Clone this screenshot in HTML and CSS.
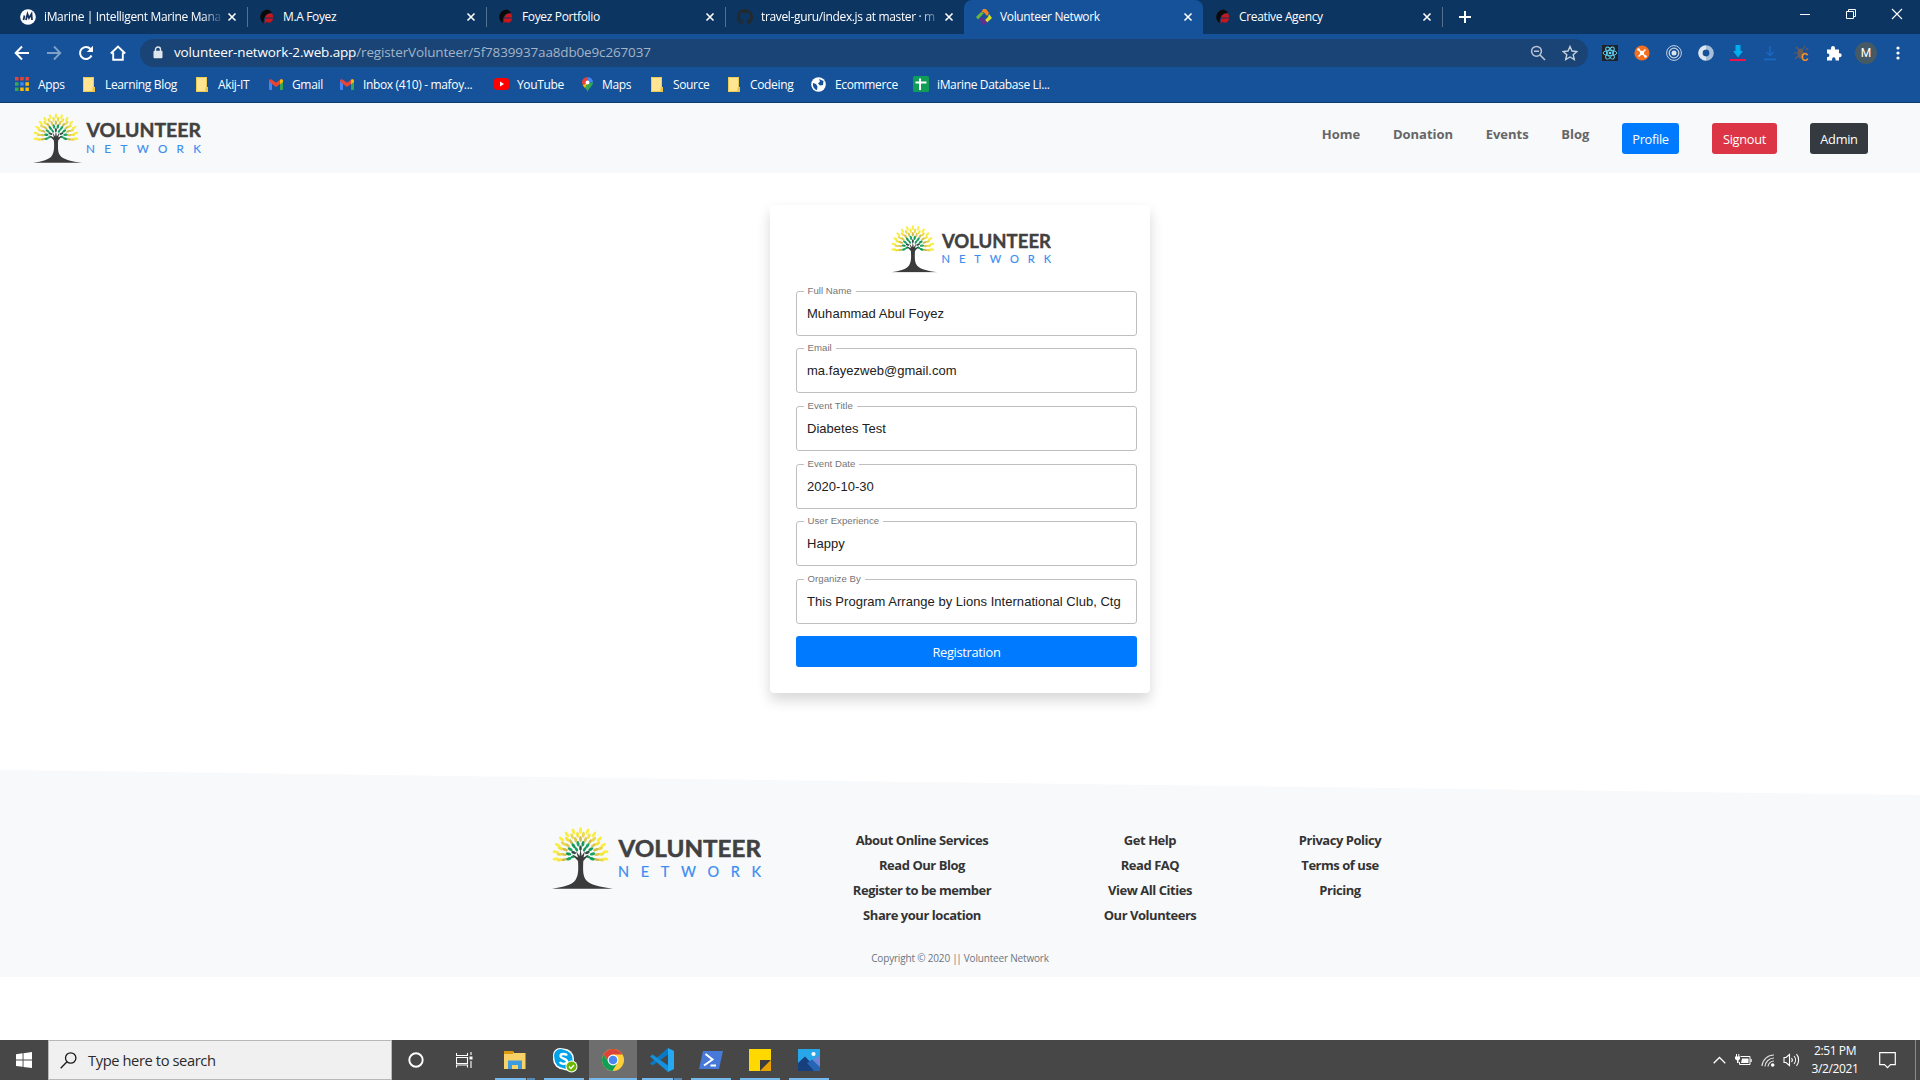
FILE: index.html
```html
<!DOCTYPE html>
<html lang="en">
<head>
<meta charset="utf-8">
<title>Volunteer Network</title>
<link rel="stylesheet" href="styles.css">
</head>
<body>
<svg class="defs" width="0" height="0" aria-hidden="true">
  <symbol id="logo" viewBox="0 0 209 62">
    <g id="leaves"></g>
    <path d="M26 34 L20 27.500 L26 30.500 L24 24 L27.500 29 L28.500 22 L29.700 29 L33 24 L31.500 30.500 L37 27.500 L31.300 34 C30.800 44 31 49 34 53 C38 58 48 60 61 61.800 L0 61.800 C12 60 20 58 23.500 53 C26.500 48 26.500 43 26 34Z" fill="#3b3b3b"/>
    <text x="66.500" y="29.500" class="logo-a" textLength="142.500" lengthAdjust="spacingAndGlyphs">VOLUNTEER</text>
    <text x="66" y="49.800" class="logo-b" textLength="143">NETWORK</text>
  </symbol>
  <symbol id="x" viewBox="0 0 10 10"><path d="M1.500 1.500l7 7M8.500 1.500l-7 7" stroke="#fff" stroke-width="1.600"/></symbol>
  <symbol id="foyez" viewBox="0 0 16 16"><path d="M8.500 .5A8 7.500 0 0 0 2.500 12l2 2.500c0-3 .3-6 2-8s4-2.500 6.500-2.500A6 6 0 0 0 8.500 .5Z" fill="#0a0a0a"/><path d="M13 4.500c-3.500-.3-6 .8-6.800 4h8a7 7 0 0 0-1.200-4ZM6 9.500h8.200c-.4 2.200-1.800 3.700-3.700 4.300L6.500 13 5.500 15.500Z" fill="#c8161d"/></symbol>
  <symbol id="folder" viewBox="0 0 12 15"><path d="M0 0h11v10h1v5H0z" fill="#ffe591"/><path d="M9.500 10.500h2V15h-2z" fill="#e9c342"/><path d="M.5.5h10v10h1v4H.5z" fill="none" stroke="#e9c342" stroke-width=".8"/></symbol>
  <symbol id="gmail" viewBox="0 0 14 11"><path d="M0 1.500V10a1 1 0 0 0 1 1h2V4Z" fill="#4285f4"/><path d="M14 1.500V10a1 1 0 0 1-1 1h-2V4Z" fill="#34a853"/><path d="M0 2C0 .3 1.700-.3 3 .8l4 3 4-3c1.300-1.100 3-.5 3 1.200L11 5 7 8 3 5Z" fill="#ea4335"/><path d="M11 .8C12.300-.3 14 .3 14 2v1l-3 2.200Z" fill="#fbbc04"/></symbol>
</svg>

<header class="browser">
  <div class="tabstrip">
    <div class="tab"><svg class="fav" viewBox="0 0 16 16"><circle cx="8" cy="8" r="7.800" fill="#fff"/><path d="M3.500 11L4.500 6.500M6 11l1.500-6 1.500 4L11.500 5l.5 6" fill="none" stroke="#17305c" stroke-width="1.800"/></svg><span class="title fade">iMarine | Intelligent Marine Mana</span><svg class="close"><use href="#x"/></svg></div>
    <div class="tab"><svg class="fav"><use href="#foyez"/></svg><span class="title">M.A Foyez</span><svg class="close"><use href="#x"/></svg></div>
    <div class="tab"><svg class="fav"><use href="#foyez"/></svg><span class="title">Foyez Portfolio</span><svg class="close"><use href="#x"/></svg></div>
    <div class="tab plain"><svg class="fav" viewBox="0 0 16 16"><path fill="#24292e" d="M8 0C3.580 0 0 3.580 0 8c0 3.540 2.290 6.530 5.470 7.590.4.070.55-.17.55-.38 0-.19-.01-.82-.01-1.490-2.010.37-2.530-.49-2.690-.94-.09-.23-.48-.94-.82-1.130-.28-.15-.68-.52-.01-.53.63-.01 1.080.58 1.230.82.72 1.210 1.870.87 2.330.66.070-.52.28-.87.51-1.070-1.780-.2-3.640-.89-3.640-3.950 0-.87.31-1.590.82-2.150-.08-.2-.36-1.020.08-2.120 0 0 .67-.21 2.200.82a7.600 7.600 0 0 1 4 0c1.530-1.040 2.200-.82 2.200-.82.44 1.100.16 1.920.08 2.120.51.56.82 1.270.82 2.150 0 3.070-1.870 3.750-3.650 3.950.29.25.54.73.54 1.480 0 1.070-.01 1.930-.01 2.200 0 .21.15.46.55.38A8 8 0 0 0 16 8c0-4.420-3.580-8-8-8z"/></svg><span class="title fade">travel-guru/index.js at master · m</span><svg class="close"><use href="#x"/></svg></div>
    <div class="tab active"><svg class="fav" viewBox="0 0 16 16"><path d="M7 0h3l3 4-2 3-3-3.500L5.500 3Z" fill="#f58220"/><path d="M13 5l3 4-5 4.500L9 11l3-3Z" fill="#d7df23"/><path d="M5 3L0 8l2 2.500L8 4Z" fill="#6cb33f"/><path d="M3 9.500L6.500 8.500 11 13 8.500 16H7Z" fill="#662d91"/></svg><span class="title">Volunteer Network</span><svg class="close"><use href="#x"/></svg></div>
    <div class="tab"><svg class="fav"><use href="#foyez"/></svg><span class="title">Creative Agency</span><svg class="close"><use href="#x"/></svg></div>
    <svg class="newtab" viewBox="0 0 12 12"><path d="M6 0v12M0 6h12" stroke="#fff" stroke-width="2"/></svg>
    <div class="winctl">
      <svg viewBox="0 0 12 12"><path d="M1 6.500h10" stroke="#fff"/></svg>
      <svg viewBox="0 0 12 12"><path d="M1.500 3.500h7v7h-7zM3.500 3V1.500h7v7H9" fill="none" stroke="#fff"/></svg>
      <svg viewBox="0 0 12 12"><path d="M1 1l10 10M11 1L1 11" stroke="#fff" stroke-width="1.100"/></svg>
    </div>
  </div>

  <div class="toolbar">
    <div class="navicons">
      <svg viewBox="0 0 16 16"><path d="M15 8H2M8 1.500L1.700 8 8 14.500" fill="none" stroke="#fff" stroke-width="2"/></svg>
      <svg class="dim" viewBox="0 0 16 16"><path d="M1 8h13M8 1.500L14.300 8 8 14.500" fill="none" stroke="#fff" stroke-width="1.800"/></svg>
      <svg viewBox="0 0 16 16"><path d="M13.500 10.500A6 6 0 1 1 12.500 4" fill="none" stroke="#fff" stroke-width="2"/><path d="M15 .8V7H8.800Z" fill="#fff"/></svg>
      <svg viewBox="0 0 16 16"><path d="M.8 8.500L8 1.500l7.200 7M3.200 7.500v7.200h9.600V7.500" fill="none" stroke="#fff" stroke-width="1.900"/></svg>
    </div>
    <div class="omnibox">
      <svg class="lock" viewBox="0 0 10 13"><path d="M2.500 5V3.500a2.500 2.500 0 0 1 5 0V5" fill="none" stroke="#dfe6ee" stroke-width="1.400"/><rect x=".5" y="4.800" width="9" height="7.500" rx="1" fill="#dfe6ee"/></svg>
      <span class="url"><b>volunteer-network-2.web.app</b><span class="path">/registerVolunteer/5f7839937aa8db0e9c267037</span></span>
      <svg class="omni-ic" viewBox="0 0 16 16"><path d="M10 10l5 5M4 6.300h5" stroke="#b9c6d6" stroke-width="1.600"/><circle cx="6.500" cy="6.300" r="4.900" fill="none" stroke="#b9c6d6" stroke-width="1.500"/></svg>
      <svg class="omni-ic" viewBox="0 0 16 16"><path d="M8 1.500l2 4.500 4.900.5-3.700 3.200 1.100 4.800L8 12l-4.300 2.500 1.100-4.800L1.100 6.500 6 6Z" fill="none" stroke="#c5d0dd" stroke-width="1.400"/></svg>
    </div>
    <div class="exts">
      <svg viewBox="0 0 16 16"><rect width="16" height="16" fill="#20232a"/><g fill="none" stroke="#61dafb" stroke-width=".9"><ellipse cx="8" cy="8" rx="6.800" ry="2.700"/><ellipse cx="8" cy="8" rx="6.800" ry="2.700" transform="rotate(60 8 8)"/><ellipse cx="8" cy="8" rx="6.800" ry="2.700" transform="rotate(120 8 8)"/></g><circle cx="8" cy="8" r="1.300" fill="#61dafb"/></svg>
      <svg viewBox="0 0 16 16"><circle cx="8" cy="8" r="7.600" fill="#f36f21"/><path d="M4.500 4.500l7 7M11.500 4.500l-7 7" stroke="#fff" stroke-width="1.500"/><circle cx="8" cy="8" r="2.200" fill="#fff"/><circle cx="4.500" cy="4.500" r="1.300" fill="#fff"/><circle cx="11.500" cy="11.500" r="1.300" fill="#fff"/></svg>
      <svg viewBox="0 0 16 16"><g fill="none" stroke="#c5d0df"><circle cx="8" cy="8" r="7.400"/><circle cx="8" cy="8" r="4.800" stroke-width="1.300"/></g><circle cx="8" cy="8" r="2.500" fill="#dce4ed"/></svg>
      <svg viewBox="0 0 16 16"><circle cx="8" cy="8" r="5.600" fill="none" stroke="#a9bfd8" stroke-width="4.400"/><path d="M8 2.400A5.600 5.600 0 0 0 8 13.600" fill="none" stroke="#dbe6f1" stroke-width="4"/></svg>
      <svg viewBox="0 0 16 16"><path d="M5.500 0h5v6H13l-5 6.500L3 6h2.500Z" fill="#00aeef"/><path d="M0 14h16v2H0z" fill="#f0134d"/></svg>
      <svg viewBox="0 0 16 16"><path d="M8 1v9M4.500 7L8 10.500 11.500 7" fill="none" stroke="#1b67c4" stroke-width="1.500"/><path d="M2 13.500h12v1.800H2z" fill="#1b67c4"/></svg>
      <svg viewBox="0 0 16 16"><ellipse cx="6.500" cy="8.500" rx="2.800" ry="5" fill="#695d59"/><path d="M2 2l4 4M11 1L8 6M0 8h13M1 14l4-4M12 5l2-2" stroke="#695d59" stroke-width="1.100"/><text x="7" y="15.500" class="bugc">C</text></svg>
      <svg viewBox="0 0 16 16"><path d="M1 4.500h4V3a2 2 0 0 1 4 0v1.500h4v3.700h.7a2 2 0 0 1 0 4H13v3.300H9.500V14a1.700 1.700 0 0 0-3.400 0v1.500H1V12h1a1.800 1.800 0 0 0 0-3.500H1Z" fill="#fff"/></svg>
      <span class="avatar">M</span>
      <svg viewBox="0 0 16 16"><g fill="#fff"><circle cx="8" cy="3" r="1.600"/><circle cx="8" cy="8" r="1.600"/><circle cx="8" cy="13" r="1.600"/></g></svg>
    </div>
  </div>

  <div class="bookmarks">
    <span class="bm"><svg width="14" height="14" viewBox="0 0 14 14"><path d="M0 0h3.500v3.500H0zM5.200 0h3.500v3.500H5.200zM10.400 0h3.500v3.500h-3.500z" fill="#ea4335"/><path d="M0 5.200h3.500v3.500H0zM0 10.400h3.500v3.500H0z" fill="#34a853"/><path d="M5.200 5.200h3.500v3.500H5.200z" fill="#4285f4"/><path d="M5.200 10.400h3.500v3.500H5.200zM10.400 5.200h3.500v3.500h-3.500zM10.400 10.400h3.500v3.500h-3.500z" fill="#fbbc04"/></svg>Apps</span>
    <span class="bm folder"><svg width="12" height="15"><use href="#folder"/></svg>Learning Blog</span>
    <span class="bm folder"><svg width="12" height="15"><use href="#folder"/></svg>Akij-IT</span>
    <span class="bm"><svg width="14" height="11"><use href="#gmail"/></svg>Gmail</span>
    <span class="bm"><svg width="14" height="11"><use href="#gmail"/></svg>Inbox (410) - mafoy...</span>
    <span class="bm yt"><svg width="15" height="12" viewBox="0 0 15 12"><rect width="15" height="12" rx="3" fill="#f00"/><path d="M6 3.500v5L10 6Z" fill="#fff"/></svg>YouTube</span>
    <span class="bm"><svg width="11" height="15" viewBox="0 0 11 15"><path d="M0 5.500A5.500 5.500 0 0 1 5.500 0v5.500L1 9Z" fill="#ea4335"/><path d="M5.500 0A5.500 5.500 0 0 1 11 5.500L5.500 5.500Z" fill="#4285f4"/><path d="M.8 8.500L5.500 5.500 3.500 11.500Z" fill="#fbbc04"/><path d="M11 5.500C11 9 7 10.500 5.500 15 5 13 4 12 3 10.500L6 6Z" fill="#34a853"/><circle cx="5.500" cy="5.500" r="1.900" fill="#fff"/></svg>Maps</span>
    <span class="bm folder"><svg width="12" height="15"><use href="#folder"/></svg>Source</span>
    <span class="bm folder"><svg width="12" height="15"><use href="#folder"/></svg>Codeing</span>
    <span class="bm"><svg width="15" height="15" viewBox="0 0 15 15"><circle cx="7.500" cy="7.500" r="7.300" fill="#fff"/><path d="M2 6l3 1 1.500 2.500L6 13C3 12.500 1.500 9 2 6ZM8 2l4.500 2-.5 4-3 .5L7 6.500 9 4.500Z" fill="#15529a"/></svg>Ecommerce</span>
    <span class="bm yt"><svg width="16" height="16" viewBox="0 0 16 16"><rect width="16" height="16" rx="1.500" fill="#0f9d58"/><path d="M7 2.500V14M2.500 6.500h11" stroke="#fff" stroke-width="2"/></svg>iMarine Database Li...</span>
  </div>
</header>

<nav class="navbar">
  <svg class="logo-nav"><use href="#logo"/></svg>
  <div class="menu">
    <a>Home</a><a>Donation</a><a>Events</a><a>Blog</a>
    <button class="btn profile">Profile</button>
    <button class="btn signout">Signout</button>
    <button class="btn admin">Admin</button>
  </div>
</nav>

<main class="main">
  <form class="card">
    <svg class="logo-card"><use href="#logo"/></svg>
    <fieldset><legend>Full Name</legend><div>Muhammad Abul Foyez</div></fieldset>
    <fieldset><legend>Email</legend><div>ma.fayezweb@gmail.com</div></fieldset>
    <fieldset><legend>Event Title</legend><div>Diabetes Test</div></fieldset>
    <fieldset><legend>Event Date</legend><div>2020-10-30</div></fieldset>
    <fieldset><legend>User Experience</legend><div>Happy</div></fieldset>
    <fieldset><legend>Organize By</legend><div>This Program Arrange by Lions International Club, Ctg</div></fieldset>
    <button type="button" class="btn register">Registration</button>
  </form>
</main>

<footer class="footer">
  <div class="footcols">
    <svg class="logo-foot"><use href="#logo"/></svg>
    <ul><li>About Online Services</li><li>Read Our Blog</li><li>Register to be member</li><li>Share your location</li></ul>
    <ul><li>Get Help</li><li>Read FAQ</li><li>View All Cities</li><li>Our Volunteers</li></ul>
    <ul><li>Privacy Policy</li><li>Terms of use</li><li>Pricing</li></ul>
  </div>
  <p class="copy">Copyright © 2020 <span class="bars">||</span> Volunteer Network</p>
</footer>

<div class="taskbar">
  <span class="cell"><svg width="16" height="16" viewBox="0 0 16 16"><path d="M0 2.200L6.600 1.300V7.600H0zM7.500 1.200L16 0V7.600H7.500zM0 8.500H6.600V14.800L0 13.900zM7.500 8.500H16V16L7.500 14.900z" fill="#fff"/></svg></span>
  <div class="search"><svg width="17" height="17" viewBox="0 0 17 17"><circle cx="10.700" cy="6" r="5.200" fill="none" stroke="#1a1a1a" stroke-width="1.300"/><path d="M7 9.800L.7 16.300" stroke="#1a1a1a" stroke-width="1.300"/></svg><span>Type here to search</span></div>
  <span class="cell"><svg width="16" height="16" viewBox="0 0 16 16"><circle cx="8" cy="8" r="6.700" fill="none" stroke="#fff" stroke-width="1.900"/></svg></span>
  <span class="cell"><svg width="17" height="16" viewBox="0 0 17 16"><path d="M.5 1v2.500h11V1M.5 15.500V13h11v2.500M.5 5.500h11v6H.5zM15 0v3M15 9v7" fill="none" stroke="#fff" stroke-width="1.100"/><path d="M13.500 4.500h3v3h-3z" fill="#fff"/></svg></span>
  <div class="apps">
    <span class="app multi"><svg width="22" height="20" viewBox="0 0 22 20"><path d="M0 1h9l1 2h11.500v16H0z" fill="#f9d267"/><path d="M0 1h9v3H0z" fill="#dc9a13"/><path d="M4 19v-8.500h14V19h-4v-4H8v4Z" fill="#3d9be0"/></svg></span>
    <span class="app skype"><svg width="26" height="26" viewBox="0 0 26 26"><circle cx="8" cy="8" r="7" fill="#fff"/><circle cx="15" cy="16" r="7.500" fill="#fff"/><circle cx="11.500" cy="12" r="10.500" fill="#fff"/><circle cx="8.500" cy="8.500" r="6.500" fill="#00a3e8"/><circle cx="14.500" cy="15.500" r="6.500" fill="#00a3e8"/><circle cx="11.500" cy="12" r="9" fill="#00a3e8"/><path d="M15 8.500C14 6.500 8.500 6.300 8.500 9S15 11.500 15 14.500 9 17.500 8 14.800" fill="none" stroke="#fff" stroke-width="2.300"/><circle cx="19.500" cy="19.500" r="6" fill="#fff"/><circle cx="19.500" cy="19.500" r="5" fill="#6bb700"/><path d="M17 19.500l2 2 3-3.500" fill="none" stroke="#fff" stroke-width="1.300"/></svg></span>
    <span class="app current"><svg width="22" height="22" viewBox="0 0 22 22"><circle cx="11" cy="11" r="11" fill="#fdd03b"/><path d="M1.500 5.500A11 11 0 0 1 20.500 5.500H11L7 13Z" fill="#db4437"/><path d="M1.500 5.500A11 11 0 0 0 10.500 22L15.500 13.500 7 13.500Z" fill="#0f9d58"/><circle cx="11" cy="11" r="5.400" fill="#fff"/><circle cx="11" cy="11" r="4.300" fill="#4a87f0"/></svg></span>
    <span class="app multi"><svg width="24" height="24" viewBox="0 0 24 24"><path d="M18 0l6 3v18l-6 3Z" fill="#24a9f2"/><path d="M18 0L0 15.500l2.500 2L18 6.500Z" fill="#0a7ac4"/><path d="M18 24L0 8.500l2.500-2L18 17.500Z" fill="#1391dc"/></svg></span>
    <span class="app"><svg width="24" height="18" viewBox="0 0 24 18"><path d="M4 0h20l-4 18H0Z" fill="#477ad8"/><path d="M6.500 3l7 5.500L5 14.500M11.500 14.500h5.500" fill="none" stroke="#fff" stroke-width="2"/></svg></span>
    <span class="app"><svg width="22" height="22" viewBox="0 0 22 22"><path d="M0 0h22v11L11 22H0z" fill="#ffd800"/><path d="M11 11h11L11 22Z" fill="#3d3d3d"/><path d="M22 11v11H11Z" fill="#e8a200"/></svg></span>
    <span class="app"><svg width="22" height="22" viewBox="0 0 22 22"><path d="M0 0h22v22H0z" fill="#27a7e9"/><path d="M22 6v16H10L14 11Z" fill="#6c86d8"/><path d="M0 14l7-6.500L21 22H0Z" fill="#173e7d"/><path d="M9 14l5-3.500L22 18v4H16Z" fill="#2565b4"/><circle cx="15.500" cy="5" r="2.100" fill="#fff"/></svg></span>
  </div>
  <div class="tray">
    <svg width="13" height="8" viewBox="0 0 13 8"><path d="M.7 7.300L6.500 1.500l5.800 5.800" fill="none" stroke="#fff" stroke-width="1.300"/></svg>
    <svg width="17" height="13" viewBox="0 0 17 13"><path d="M5.500 2.500h9.500v8H4.500V8" fill="none" stroke="#fff"/><path d="M7 4.500h6.500v4.500H6zM15.500 5h1.200v3h-1.200zM0 2.500h5V5L3.500 6.500V9h-1.500V6.500L0 5zM1 0h1v3H1zM3.300 0h1v3h-1z" fill="#fff"/></svg>
    <svg width="14" height="14" viewBox="0 0 14 14"><path d="M1 13A12 12 0 0 1 13 2M4 13.500A9 9 0 0 1 13 5M7 13.500A6 6 0 0 1 13 8" fill="none" stroke="#ddd" stroke-width="1.200"/><circle cx="11.700" cy="12" r="1.800" fill="#fff"/></svg>
    <svg class="volume" width="17" height="14" viewBox="0 0 17 14"><path d="M1 4.500h2L6.500 1.500v11L3 9.500H1ZM8.500 5a3 3 0 0 1 0 4M11 3a6 6 0 0 1 0 8M13.500 1.200a9 9 0 0 1 0 11.600" fill="none" stroke="#fff" stroke-width="1.100"/></svg>
    <div class="clock"><span>2:51 PM</span><span>3/2/2021</span></div>
    <svg width="17" height="17" viewBox="0 0 17 17"><path d="M.7.7h15.600v12H11.500l-3 3-3-3H.7Z" fill="none" stroke="#fff" stroke-width="1.200"/></svg>
    <i class="peek"></i>
  </div>
</div>
<script src="script.js"></script>
</body>
</html>
```

FILE: styles.css
```css
* { box-sizing: border-box; }
body {
  margin: 0; width: 1920px; height: 1080px; overflow: hidden;
  display: flex; flex-direction: column;
  background: #fff; font-family: "Open Sans", "Noto Sans", sans-serif;
}
.defs { position: absolute; }
svg { display: block; flex: none; }

/* logo */
.logo-a { font: 700 23.500px Lato, sans-serif; fill: #414141; stroke: #414141; stroke-width: .5px; }
.logo-b { font: 400 14.500px Lato, sans-serif; fill: #3c8df0; stroke: #3c8df0; stroke-width: .2px; }
.logo-nav { width: 168px; height: 50px; }
.logo-card { width: 160px; height: 47.500px; margin: 0 0 13px 94.500px; }
.logo-foot { width: 209px; height: 62px; }

/* browser window */
.browser { height: 103px; background: #15529a; border-bottom: 1px solid #0e3a6c; color: #fff; flex: none; }
.tabstrip { height: 34px; background: #0c3562; display: flex; align-items: center; padding-left: 8px; }
.tab {
  width: 239px; height: 34px; padding: 0 10px 0 12px; flex: none;
  display: flex; align-items: center; position: relative;
}
.tab::after { content: ""; position: absolute; right: -1px; top: 7px; width: 1px; height: 20px; background: #56708f; }
.tab.plain::after, .tab.active::after { display: none; }
.tab.active { background: #15529a; border-radius: 8px 8px 0 0; }
.fav { width: 16px; height: 16px; }
.title { flex: 1; margin: 0 3px 2px 8px; font-size: 12px; letter-spacing: -.35px; white-space: nowrap; }
.fade { -webkit-mask-image: linear-gradient(90deg, #000 88%, transparent); mask-image: linear-gradient(90deg, #000 88%, transparent); }
.close { width: 10px; height: 10px; }
.newtab { width: 12px; height: 12px; margin-left: 17px; }
.winctl { margin-left: auto; display: flex; gap: 34px; padding: 0 17px 6px 0; }
.winctl svg { width: 12px; height: 12px; }

.toolbar { height: 36px; display: flex; align-items: center; padding: 1px 14px 0; }
.navicons { display: flex; gap: 16px; width: 126px; }
.navicons svg { width: 16px; height: 16px; }
.dim { opacity: .45; }
.omnibox { width: 1448px; height: 28px; border-radius: 14px; background: #1a4475; display: flex; align-items: center; padding: 0 10px 0 13px; }
.lock { width: 10px; height: 13px; }
.url { flex: 1; margin: 0 0 2px 11px; font-size: 13.500px; letter-spacing: -.14px; white-space: nowrap; }
.url b { font-weight: 400; }
.path { color: #a3b4c8; letter-spacing: -.15px; }
.omni-ic { width: 16px; height: 16px; margin-left: 16px; }
.exts { display: flex; gap: 16px; align-items: center; margin-left: 14px; }
.exts svg { width: 16px; height: 16px; }
.bugc { font: 700 10px "Liberation Sans", sans-serif; fill: #f7931e; }
.avatar { width: 22px; height: 22px; margin: 0 -3px; border-radius: 50%; background: #455a64; font: 12px/22px Roboto, sans-serif; text-align: center; }

.bookmarks {
  height: 28px; padding: 0 0 0 15px; display: grid; align-items: center;
  grid-template-columns: 68px 113px 73px 71px 154px 88px 69px 77px 83px 102px 150px;
}
.bm { display: flex; align-items: center; gap: 9px; font-size: 12px; letter-spacing: -.35px; line-height: 17px; white-space: nowrap; }
.bm.folder { gap: 10px; }
.bm.yt { gap: 8px; }

/* site navigation */
.navbar { height: 70px; flex: none; background: #f8f9fb; padding: 10px 52px 0 32.500px; display: flex; justify-content: space-between; }
.menu { display: flex; align-items: flex-start; padding-top: 10px; }
.menu a { font-size: 13px; font-weight: 700; line-height: 23px; color: #666; margin-right: 32.700px; letter-spacing: -.02px; }
.btn { border: 0; border-radius: 3px; height: 31px; padding: 0; color: #fff; font: 12.800px/32px "Open Sans", sans-serif; letter-spacing: -.3px; }
.menu .btn + .btn { margin-left: 33px; }
.profile { width: 57px; background: #007bff; }
.signout { width: 65px; background: #dc3545; }
.admin { width: 58px; background: #343a40; }

/* registration card */
.main { height: 597px; flex: none; display: flex; justify-content: center; align-items: flex-start; padding-top: 32px; }
.card {
  width: 380px; height: 488px; padding: 20px 13px 0 26px; border-radius: 4px; background: #fff;
  box-shadow: 0 7px 14px rgba(0,0,0,.16); display: flex; flex-direction: column;
}
fieldset {
  margin: 0 0 7.700px; height: 50px; padding: 0 0 0 7px; border: 1px solid #bfbfbf; border-radius: 3px;
  font-family: "Liberation Sans", sans-serif; flex: none; min-width: 0;
}
legend { height: 11px; padding: 0 4px 0 3.500px; font-size: 9.600px; line-height: 9px; color: #757575; letter-spacing: .05px; }
fieldset div { padding-left: 3px; margin-top: 8px; font-size: 13px; line-height: 18px; color: #212121; letter-spacing: .03px; white-space: nowrap; }
.register { height: 31px; background: #007bff; flex: none; margin-top: 4.500px; }

/* footer */
.footer { height: 207px; flex: none; background: #f8f9fb; clip-path: polygon(0 0, 100% 25px, 100% 100%, 0 100%); padding-top: 57px; }
.footcols { display: grid; grid-template-columns: 243px 254px 202px 178px; padding-left: 552px; height: 122px; }
ul { list-style: none; margin: 1px 0 0; padding: 0; text-align: center; }
li { font-size: 13px; font-weight: 700; line-height: 25px; color: #343434; letter-spacing: -.46px; white-space: nowrap; }
.copy { margin: 0; text-align: center; font-size: 10px; line-height: 18px; color: #6c757d; letter-spacing: -.18px; }
.bars { letter-spacing: -1.500px; margin-right: 1px; }

/* taskbar */
.taskbar { margin-top: auto; height: 40px; background: #474747; display: flex; color: #fff; flex: none; }
.cell { width: 48px; display: grid; place-items: center; flex: none; }
.search { width: 344px; border: 1px solid #b8b8b8; background: #f0f0f0; color: #2b2b2b; display: flex; align-items: center; gap: 11px; padding-left: 11px; font-size: 14.700px; letter-spacing: -.4px; }
.apps { display: flex; gap: 1px; margin-left: 3px; }
.app { width: 48px; display: grid; place-items: center; position: relative; }
.skype { padding-left: 2px; }
.app::after { content: ""; position: absolute; left: 4px; right: 4px; bottom: 0; height: 2px; background: #76b9ed; }
.app.current { background: #6e6e6e; }
.app.current::after { left: 0; right: 0; }
.app.multi::after { background: linear-gradient(90deg, #76b9ed 31px, #474747 31px 32px, #5688b4 32px); }
.tray { margin-left: auto; display: flex; align-items: center; }
.tray > svg { margin-right: 9px; }
.tray > .volume { margin: 0 0 0 -1px; }
.clock { width: 70px; display: flex; flex-direction: column; align-items: center; font-size: 12px; line-height: 18px; letter-spacing: -.4px; margin-right: 9px; }
.tray .peek { width: 1px; height: 40px; background: #8a8a8a; margin: 0 4px 0 10px; }
```

FILE: script.js
```js
// Draws the rings of leaves of the logo's tree.
const NS = "http://www.w3.org/2000/svg";
const rings = [
  { r: 25, n: 13, from: -98, to: 98, rx: 1.5, ry: 3.2, colors: ["#f9ee45"] },
  { r: 21, n: 14, from: -102, to: 102, rx: 1.5, ry: 3, colors: ["#f3e33b", "#ead94a"] },
  { r: 16.5, n: 13, from: -104, to: 104, rx: 1.4, ry: 2.9, colors: ["#d2bb4c", "#dcc850"] },
  { r: 12, n: 10, from: -106, to: 106, rx: 1.5, ry: 2.8, colors: ["#1fa463", "#159a58"] },
  { r: 7.5, n: 7, from: -100, to: 100, rx: 1.3, ry: 2.5, colors: ["#149b58", "#2c4b3e"] }
];
const group = document.getElementById("leaves");
for (const ring of rings) {
  for (let i = 0; i < ring.n; i++) {
    const angle = ring.from + (ring.to - ring.from) * i / (ring.n - 1);
    const leaf = document.createElementNS(NS, "ellipse");
    leaf.setAttribute("cx", 28.5);
    leaf.setAttribute("cy", 28.5 - ring.r);
    leaf.setAttribute("rx", ring.rx);
    leaf.setAttribute("ry", ring.ry);
    leaf.setAttribute("fill", ring.colors[i % ring.colors.length]);
    leaf.setAttribute("transform", `rotate(${angle} 28.5 28.5)`);
    group.appendChild(leaf);
  }
}
```
